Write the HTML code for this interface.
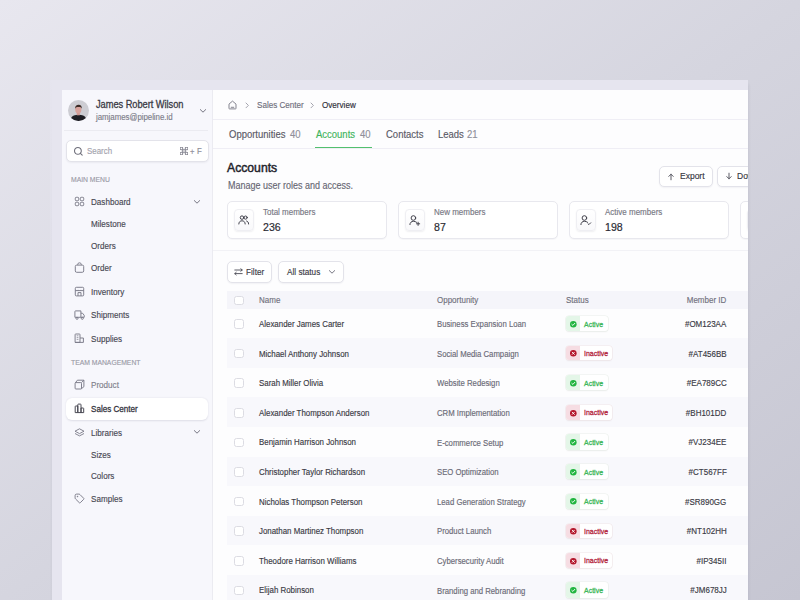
<!DOCTYPE html>
<html>
<head>
<meta charset="utf-8">
<style>
*{box-sizing:border-box;margin:0;padding:0}
html,body{width:800px;height:600px;overflow:hidden}
body{position:relative;font-family:"Liberation Sans",sans-serif;background:linear-gradient(to bottom right,#e8e7ef 0%,#d5d5df 50%,#c6c6d2 100%);color:#3a3a44}
.clip{position:absolute;left:0;top:0;width:748px;height:600px;overflow:hidden}
.abs{position:absolute}
.t{position:absolute;white-space:nowrap;line-height:1;-webkit-text-stroke:0.15px currentColor}
</style>
</head>
<body>
<div style="position:absolute;left:52px;top:84px;width:696px;height:560px;box-shadow:0 0 3px 0.5px rgba(60,60,95,0.10)"></div>
<div class="clip">
<div class="abs" style="left:50px;top:80px;width:2px;height:540px;background:linear-gradient(rgba(230,229,239,0.9),rgba(230,229,239,0.0) 60%)"></div>
<div class="abs" style="left:52px;top:80px;width:696px;height:540px;background:#e6e5ef"></div>
<div class="abs" style="left:62px;top:90px;width:686px;height:530px;background:#fdfdfe"></div>
<div class="abs" style="left:62px;top:90px;width:151px;height:530px;background:#f7f7fc;border-right:1px solid #ebebf1"></div>
<svg class="abs" style="left:68px;top:100px;" width="21" height="21" viewBox="0 0 21 21" fill="none"><circle cx="10.5" cy="10.5" r="10.5" fill="#cdcdd3"/><path d="M3.15 18 C4 15.6 7 14.8 10.5 14.8 C14 14.8 17 15.6 17.85 18 A10.5 10.5 0 0 1 3.15 18 Z" fill="#1e1e24"/><rect x="8.8" y="12" width="3" height="3.3" fill="#cf9792"/><ellipse cx="10.3" cy="9.6" rx="3.1" ry="3.9" fill="#d8a29c"/><path d="M7.2 8.8 C7 5.8 8.5 4.8 10.6 4.8 C12.8 4.8 14 6 13.8 8.8 C13.3 7.4 12.5 7 10.5 7 C8.6 7 7.8 7.4 7.2 8.8Z" fill="#3b2b26"/></svg>
<div class="t" style="left:96.00px;transform-origin:0 50%;top:100.22px;font-size:10.42px;color:#3b3b45;font-weight:400;letter-spacing:-0.05px;transform:scaleX(0.8929);-webkit-text-stroke:0.3px #3b3b45">James Robert Wilson</div>
<div class="t" style="left:96.00px;transform-origin:0 50%;top:113.28px;font-size:8.85px;color:#7d7d8a;font-weight:400;letter-spacing:-0.05px;transform:scaleX(0.8929);">jamjames@pipeline.id</div>
<svg class="abs" style="left:198.5px;top:107.5px;" width="8" height="6" viewBox="0 0 8 6" fill="none"><path d="M1.3 1.6 L4 4.2 L6.7 1.6" stroke="#6f6f7b" stroke-width="0.95" stroke-linecap="round" stroke-linejoin="round"/></svg>
<div class="abs" style="left:64px;top:130px;width:144px;height:1px;background:#ebebf1"></div>
<div class="abs" style="left:66px;top:140px;width:142.5px;height:22px;background:#fff;border:1px solid #e3e3ea;border-radius:5px;box-shadow:0 1px 2px rgba(40,40,70,0.06)"></div>
<svg class="abs" style="left:73px;top:146px;" width="11" height="11" viewBox="0 0 11 11" fill="none"><circle cx="4.9" cy="4.9" r="3.4" stroke="#6e6e7a" stroke-width="1.05"/><path d="M7.4 7.4 L9.2 9.2" stroke="#6e6e7a" stroke-width="1.05" stroke-linecap="round"/></svg>
<div class="t" style="left:86.80px;transform-origin:0 50%;top:147.48px;font-size:8.85px;color:#a3a3ae;font-weight:400;transform:scaleX(0.8929);">Search</div>
<svg class="abs" style="left:180.2px;top:147.1px;" width="8" height="8" viewBox="0 0 8 8" fill="none"><path d="M2.7 6.6 V1.4 A1.3 1.3 0 1 0 1.4 2.7 H6.6 A1.3 1.3 0 1 0 5.3 1.4 V6.6 A1.3 1.3 0 1 0 6.6 5.3 H1.4 A1.3 1.3 0 1 0 2.7 6.6 Z" stroke="#8a8a95" stroke-width="1.05" fill="none" stroke-linejoin="round"/></svg>
<div class="t" style="left:190.00px;transform-origin:0 50%;top:147.55px;font-size:8.51px;color:#8a8a95;font-weight:400;transform:scaleX(0.8929);">+</div>
<div class="t" style="left:196.50px;transform-origin:0 50%;top:147.28px;font-size:8.85px;color:#8a8a95;font-weight:400;transform:scaleX(0.8929);">F</div>
<div class="t" style="left:71.00px;transform-origin:0 50%;top:175.68px;font-size:7.62px;color:#9a9aa6;font-weight:400;transform:scaleX(0.8929);">MAIN MENU</div>
<svg class="abs" style="left:73.5px;top:196.0px;" width="11" height="11" viewBox="0 0 11 11" fill="none"><g stroke="#7a7a88" stroke-width="0.9"><rect x="1.3" y="1.3" width="3.4" height="3.4" rx="0.8"/><rect x="6.3" y="1.3" width="3.4" height="3.4" rx="0.8"/><rect x="1.3" y="6.3" width="3.4" height="3.4" rx="0.8"/><rect x="6.3" y="6.3" width="3.4" height="3.4" rx="0.8"/></g></svg>
<div class="t" style="left:91.10px;transform-origin:0 50%;top:197.87px;font-size:9.07px;color:#484853;font-weight:400;transform:scaleX(0.8929);">Dashboard</div>
<svg class="abs" style="left:192.5px;top:198.5px;" width="8" height="6" viewBox="0 0 8 6" fill="none"><path d="M1.3 1.6 L4 4.2 L6.7 1.6" stroke="#6f6f7b" stroke-width="0.95" stroke-linecap="round" stroke-linejoin="round"/></svg>
<div class="t" style="left:91.10px;transform-origin:0 50%;top:220.37px;font-size:9.07px;color:#484853;font-weight:400;transform:scaleX(0.8929);">Milestone</div>
<div class="t" style="left:91.10px;transform-origin:0 50%;top:241.87px;font-size:9.07px;color:#484853;font-weight:400;transform:scaleX(0.8929);">Orders</div>
<svg class="abs" style="left:73.5px;top:262.3px;" width="11" height="11" viewBox="0 0 11 11" fill="none"><g stroke="#7a7a88" stroke-width="0.95" stroke-linejoin="round"><rect x="1.3" y="3.1" width="8.4" height="7.2" rx="1.4"/><path d="M3.7 3.1 V2.6 A1.8 1.8 0 0 1 7.3 2.6 V3.1"/></g></svg>
<div class="t" style="left:91.10px;transform-origin:0 50%;top:264.17px;font-size:9.07px;color:#484853;font-weight:400;transform:scaleX(0.8929);">Order</div>
<svg class="abs" style="left:73.5px;top:285.9px;" width="11" height="11" viewBox="0 0 11 11" fill="none"><g stroke="#7a7a88" stroke-width="0.95" stroke-linejoin="round"><rect x="1.3" y="1.3" width="8.4" height="8.6" rx="1"/><path d="M1.3 4.6 H9.7 M4.1 4.6 V3.9 M6.9 4.6 V3.9 M4 9.9 V6.6 H7 V9.9"/></g></svg>
<div class="t" style="left:91.10px;transform-origin:0 50%;top:287.77px;font-size:9.07px;color:#484853;font-weight:400;transform:scaleX(0.8929);">Inventory</div>
<svg class="abs" style="left:73.5px;top:309.5px;" width="11" height="11" viewBox="0 0 11 11" fill="none"><g stroke="#7a7a88" stroke-width="0.95" stroke-linejoin="round"><path d="M1.6 0.9 H6.9 V7.3 H0.9 V1.6 Q0.9 0.9 1.6 0.9 Z"/><path d="M6.9 3.2 H8.5 L10.2 5.3 V7.3 H6.9"/><circle cx="3" cy="8.3" r="1.05"/><circle cx="8.3" cy="8.3" r="1.05"/></g></svg>
<div class="t" style="left:91.10px;transform-origin:0 50%;top:311.37px;font-size:9.07px;color:#484853;font-weight:400;transform:scaleX(0.8929);">Shipments</div>
<svg class="abs" style="left:73.5px;top:333.1px;" width="11" height="11" viewBox="0 0 11 11" fill="none"><g stroke="#7a7a88" stroke-width="0.95" stroke-linejoin="round"><path d="M1.1 9.4 V1.6 Q1.1 1 1.7 1 H5.4 Q6 1 6 1.6 V9.4 Z"/><path d="M6 5 H9.4 V9.4 H1.1"/><path d="M2.7 2.8 H4.4 M2.7 4.6 H4.4 M2.7 6.4 H4.4" stroke-width="0.7"/></g></svg>
<div class="t" style="left:91.10px;transform-origin:0 50%;top:334.97px;font-size:9.07px;color:#484853;font-weight:400;transform:scaleX(0.8929);">Supplies</div>
<div class="t" style="left:71.00px;transform-origin:0 50%;top:358.98px;font-size:7.62px;color:#9a9aa6;font-weight:400;transform:scaleX(0.8929);">TEAM MANAGEMENT</div>
<svg class="abs" style="left:73.5px;top:379.3px;" width="11" height="11" viewBox="0 0 11 11" fill="none"><g stroke="#7a7a88" stroke-width="0.95" stroke-linejoin="round"><rect x="1.1" y="3.6" width="6.4" height="6.4" rx="0.8"/><path d="M1.3 3.9 L3.4 1.2 H9.9 V7.7 L7.3 9.8 M7.5 3.6 L9.8 1.3"/></g></svg>
<div class="t" style="left:91.10px;transform-origin:0 50%;top:381.17px;font-size:9.07px;color:#80808b;font-weight:400;transform:scaleX(0.8929);">Product</div>
<div class="abs" style="left:66px;top:398px;width:142px;height:21.8px;background:#fff;border-radius:6px;box-shadow:0 0.5px 2px rgba(40,40,70,0.12)"></div>
<svg class="abs" style="left:73.5px;top:403.1px;" width="11" height="11" viewBox="0 0 11 11" fill="none"><g stroke="#3f3f4a" stroke-width="0.95" stroke-linejoin="round"><path d="M1.2 9.6 V3.6 Q1.2 3 1.8 3 H3.8 V9.6 Z"/><path d="M3.8 9.6 V1.7 Q3.8 1.1 4.4 1.1 H6.4 Q7 1.1 7 1.7 V9.6 Z"/><path d="M7 9.6 V5 H9.1 Q9.7 5 9.7 5.6 V9.6 Z"/></g></svg>
<div class="t" style="left:91.10px;transform-origin:0 50%;top:405.17px;font-size:9.07px;color:#33333d;font-weight:400;transform:scaleX(0.8929);-webkit-text-stroke:0.28px #33333d">Sales Center</div>
<svg class="abs" style="left:73.5px;top:426.7px;" width="11" height="11" viewBox="0 0 11 11" fill="none"><g stroke="#7a7a88" stroke-width="0.9" stroke-linejoin="round"><path d="M5.5 1.8 L10 4.2 L5.5 6.6 L1 4.2 Z"/><path d="M1 6.5 L5.5 8.9 L10 6.5"/></g></svg>
<div class="t" style="left:91.10px;transform-origin:0 50%;top:428.57px;font-size:9.07px;color:#484853;font-weight:400;transform:scaleX(0.8929);">Libraries</div>
<svg class="abs" style="left:192.5px;top:429.2px;" width="8" height="6" viewBox="0 0 8 6" fill="none"><path d="M1.3 1.6 L4 4.2 L6.7 1.6" stroke="#6f6f7b" stroke-width="0.95" stroke-linecap="round" stroke-linejoin="round"/></svg>
<div class="t" style="left:91.10px;transform-origin:0 50%;top:451.17px;font-size:9.07px;color:#484853;font-weight:400;transform:scaleX(0.8929);">Sizes</div>
<div class="t" style="left:91.10px;transform-origin:0 50%;top:472.37px;font-size:9.07px;color:#484853;font-weight:400;transform:scaleX(0.8929);">Colors</div>
<svg class="abs" style="left:73.5px;top:493.2px;" width="11" height="11" viewBox="0 0 11 11" fill="none"><g stroke="#7a7a88" stroke-width="0.95" stroke-linejoin="round"><path d="M1.1 2.6 Q1.1 1.1 2.6 1.1 H4.8 Q5.5 1.1 6 1.6 L9.7 5.3 Q10.2 5.8 9.7 6.3 L6.3 9.7 Q5.8 10.2 5.3 9.7 L1.6 6 Q1.1 5.5 1.1 4.8 Z"/><circle cx="3.5" cy="3.5" r="0.5" fill="#7a7a88" stroke-width="0.5"/></g></svg>
<div class="t" style="left:91.10px;transform-origin:0 50%;top:495.07px;font-size:9.07px;color:#484853;font-weight:400;transform:scaleX(0.8929);">Samples</div>
<svg class="abs" style="left:228px;top:100.2px;" width="9" height="10" viewBox="0 0 9 10" fill="none"><path d="M1 4.1 L4.5 1.1 L8 4.1 V8.4 Q8 8.9 7.5 8.9 H1.5 Q1 8.9 1 8.4 Z" stroke="#7d7d89" stroke-width="0.95" stroke-linejoin="round"/><path d="M3.2 7.3 H5.8" stroke="#7d7d89" stroke-width="0.95" stroke-linecap="round"/></svg>
<svg class="abs" style="left:245.4px;top:101.6px;" width="5" height="7" viewBox="0 0 5 7" fill="none"><path d="M1 1 L3.4 3.4 L1 5.8" stroke="#9a9aa5" stroke-width="0.9" stroke-linecap="round" stroke-linejoin="round"/></svg>
<div class="t" style="left:256.80px;transform-origin:0 50%;top:101.17px;font-size:9.07px;color:#6f6f7c;font-weight:400;transform:scaleX(0.8929);">Sales Center</div>
<svg class="abs" style="left:310.2px;top:101.6px;" width="5" height="7" viewBox="0 0 5 7" fill="none"><path d="M1 1 L3.4 3.4 L1 5.8" stroke="#9a9aa5" stroke-width="0.9" stroke-linecap="round" stroke-linejoin="round"/></svg>
<div class="t" style="left:322.30px;transform-origin:0 50%;top:101.17px;font-size:9.07px;color:#2e2e38;font-weight:500;transform:scaleX(0.8929);">Overview</div>
<div class="abs" style="left:213px;top:119px;width:535px;height:1px;background:#efeef5"></div>
<div class="t" style="left:228.50px;transform-origin:0 50%;top:129.11px;font-size:10.64px;color:#595965;font-weight:400;transform:scaleX(0.8929);">Opportunities</div>
<div class="t" style="left:289.70px;transform-origin:0 50%;top:129.11px;font-size:10.64px;color:#8f8f9a;font-weight:400;transform:scaleX(0.8929);">40</div>
<div class="t" style="left:316.00px;transform-origin:0 50%;top:129.11px;font-size:10.64px;color:#3cb45a;font-weight:400;transform:scaleX(0.8929);">Accounts</div>
<div class="t" style="left:359.70px;transform-origin:0 50%;top:129.11px;font-size:10.64px;color:#8f8f9a;font-weight:400;transform:scaleX(0.8929);">40</div>
<div class="t" style="left:385.60px;transform-origin:0 50%;top:129.11px;font-size:10.64px;color:#595965;font-weight:400;transform:scaleX(0.8929);">Contacts</div>
<div class="t" style="left:437.80px;transform-origin:0 50%;top:129.11px;font-size:10.64px;color:#595965;font-weight:400;transform:scaleX(0.8929);">Leads</div>
<div class="t" style="left:466.80px;transform-origin:0 50%;top:129.11px;font-size:10.64px;color:#8f8f9a;font-weight:400;transform:scaleX(0.8929);">21</div>
<div class="abs" style="left:213px;top:147.5px;width:535px;height:1px;background:#efeef5"></div>
<div class="abs" style="left:314.6px;top:146.6px;width:57.4px;height:1.6px;background:#52c06e"></div>
<div class="t" style="left:227.30px;transform-origin:0 50%;top:162.47px;font-size:12.57px;color:#22222a;font-weight:400;transform:scaleX(0.9709);-webkit-text-stroke:0.45px #22222a">Accounts</div>
<div class="t" style="left:227.50px;transform-origin:0 50%;top:180.88px;font-size:10.08px;color:#676773;font-weight:400;transform:scaleX(0.8929);">Manage user roles and access.</div>
<div class="abs" style="left:659px;top:165.5px;width:54px;height:21.5px;background:#fff;border:1px solid #e3e3ea;border-radius:5px;box-shadow:0 1px 1.5px rgba(40,40,70,0.05)"></div>
<svg class="abs" style="left:667px;top:172.5px;" width="8" height="8" viewBox="0 0 8 8" fill="none"><path d="M4 6.8 V1.2 M1.8 3.4 L4 1.2 L6.2 3.4" stroke="#4a4a55" stroke-width="0.9" stroke-linecap="round" stroke-linejoin="round"/></svg>
<div class="t" style="left:679.50px;transform-origin:0 50%;top:171.45px;font-size:9.52px;color:#34343e;font-weight:400;transform:scaleX(0.8929);">Export</div>
<div class="abs" style="left:717px;top:165.5px;width:60px;height:21.5px;background:#fff;border:1px solid #e3e3ea;border-radius:5px;box-shadow:0 1px 1.5px rgba(40,40,70,0.05)"></div>
<svg class="abs" style="left:724.6px;top:172.3px;" width="8" height="8" viewBox="0 0 8 8" fill="none"><path d="M4 1.2 V6.8 M1.8 4.6 L4 6.8 L6.2 4.6" stroke="#4a4a55" stroke-width="0.9" stroke-linecap="round" stroke-linejoin="round"/></svg>
<div class="t" style="left:737.00px;transform-origin:0 50%;top:171.45px;font-size:9.52px;color:#34343e;font-weight:400;transform:scaleX(0.8929);">Download</div>
<div class="abs" style="left:227px;top:201px;width:160px;height:38px;background:#fff;border:1px solid #e8e8ee;border-radius:5px;box-shadow:0 1px 1px rgba(30,30,60,0.03)"></div>
<div class="abs" style="left:234px;top:208.7px;width:20px;height:22px;background:linear-gradient(#fff,#f9f9fb);border:1px solid #efeff3;border-radius:4px;box-shadow:0 1px 1.5px rgba(40,40,70,0.07)"></div>
<svg class="abs" style="left:238px;top:214.6px;" width="12" height="11" viewBox="0 0 12 11" fill="none"><g stroke="#3a3a44" stroke-width="0.95" stroke-linecap="round"><circle cx="4" cy="2.6" r="1.75"/><circle cx="7.6" cy="2.6" r="1.6"/><path d="M0.8 9 C0.8 6.9 2.2 5.8 4 5.8 C5.8 5.8 7.2 6.9 7.2 9"/><path d="M8.6 6 C9.8 6.3 10.6 7.3 10.6 9"/></g></svg>
<div class="t" style="left:263.40px;transform-origin:0 50%;top:207.73px;font-size:8.96px;color:#777783;font-weight:400;transform:scaleX(0.8929);">Total members</div>
<div class="t" style="left:263.00px;transform-origin:0 50%;top:221.97px;font-size:11.13px;color:#2a2a32;font-weight:400;transform:scaleX(0.9524);-webkit-text-stroke:0.18px #2a2a32">236</div>
<div class="abs" style="left:398px;top:201px;width:160px;height:38px;background:#fff;border:1px solid #e8e8ee;border-radius:5px;box-shadow:0 1px 1px rgba(30,30,60,0.03)"></div>
<div class="abs" style="left:405px;top:208.7px;width:20px;height:22px;background:linear-gradient(#fff,#f9f9fb);border:1px solid #efeff3;border-radius:4px;box-shadow:0 1px 1.5px rgba(40,40,70,0.07)"></div>
<svg class="abs" style="left:409px;top:214.6px;" width="12" height="11" viewBox="0 0 12 11" fill="none"><g stroke="#3a3a44" stroke-width="0.95" stroke-linecap="round" stroke-linejoin="round"><circle cx="4.4" cy="3" r="2.3"/><path d="M0.9 9.6 C0.9 7.5 2.5 6.3 4.4 6.3 C5.7 6.3 6.8 6.7 7.6 7.3"/><path d="M9.1 7.2 V10.4 M7.5 8.8 H10.7"/></g></svg>
<div class="t" style="left:434.40px;transform-origin:0 50%;top:207.73px;font-size:8.96px;color:#777783;font-weight:400;transform:scaleX(0.8929);">New members</div>
<div class="t" style="left:434.00px;transform-origin:0 50%;top:221.97px;font-size:11.13px;color:#2a2a32;font-weight:400;transform:scaleX(0.9524);-webkit-text-stroke:0.18px #2a2a32">87</div>
<div class="abs" style="left:569px;top:201px;width:160px;height:38px;background:#fff;border:1px solid #e8e8ee;border-radius:5px;box-shadow:0 1px 1px rgba(30,30,60,0.03)"></div>
<div class="abs" style="left:576px;top:208.7px;width:20px;height:22px;background:linear-gradient(#fff,#f9f9fb);border:1px solid #efeff3;border-radius:4px;box-shadow:0 1px 1.5px rgba(40,40,70,0.07)"></div>
<svg class="abs" style="left:580px;top:214.6px;" width="12" height="11" viewBox="0 0 12 11" fill="none"><g stroke="#3a3a44" stroke-width="0.95" stroke-linecap="round" stroke-linejoin="round"><circle cx="4.4" cy="3" r="2.3"/><path d="M0.9 9.6 C0.9 7.5 2.5 6.3 4.4 6.3 C5.7 6.3 6.8 6.7 7.6 7.3"/><path d="M8 8.8 L8.9 9.6 L10.7 7.8"/></g></svg>
<div class="t" style="left:605.40px;transform-origin:0 50%;top:207.73px;font-size:8.96px;color:#777783;font-weight:400;transform:scaleX(0.8929);">Active members</div>
<div class="t" style="left:605.00px;transform-origin:0 50%;top:221.97px;font-size:11.13px;color:#2a2a32;font-weight:400;transform:scaleX(0.9524);-webkit-text-stroke:0.18px #2a2a32">198</div>
<div class="abs" style="left:740px;top:201px;width:160px;height:38px;background:#fff;border:1px solid #e8e8ee;border-radius:5px;box-shadow:0 1px 1px rgba(30,30,60,0.03)"></div>
<div class="abs" style="left:747px;top:208.7px;width:20px;height:22px;background:linear-gradient(#fff,#f9f9fb);border:1px solid #efeff3;border-radius:4px;box-shadow:0 1px 1.5px rgba(40,40,70,0.07)"></div>
<svg class="abs" style="left:751px;top:214.6px;" width="12" height="11" viewBox="0 0 12 11" fill="none"><g stroke="#3a3a44" stroke-width="0.95" stroke-linecap="round"><circle cx="4" cy="2.6" r="1.75"/><circle cx="7.6" cy="2.6" r="1.6"/><path d="M0.8 9 C0.8 6.9 2.2 5.8 4 5.8 C5.8 5.8 7.2 6.9 7.2 9"/><path d="M8.6 6 C9.8 6.3 10.6 7.3 10.6 9"/></g></svg>
<div class="t" style="left:776.40px;transform-origin:0 50%;top:207.73px;font-size:8.96px;color:#777783;font-weight:400;transform:scaleX(0.8929);">Inactive members</div>
<div class="t" style="left:776.00px;transform-origin:0 50%;top:221.97px;font-size:11.13px;color:#2a2a32;font-weight:400;transform:scaleX(0.9524);-webkit-text-stroke:0.18px #2a2a32">38</div>
<div class="abs" style="left:213px;top:249.5px;width:535px;height:1px;background:#f2f2f6"></div>
<div class="abs" style="left:226.8px;top:261px;width:45.7px;height:21.5px;background:#fff;border:1px solid #e3e3ea;border-radius:5px;box-shadow:0 1px 1.5px rgba(40,40,70,0.05)"></div>
<svg class="abs" style="left:234.3px;top:268.3px;" width="9" height="8" viewBox="0 0 9 8" fill="none"><g stroke="#4a4a55" stroke-width="0.9" stroke-linecap="round" stroke-linejoin="round"><path d="M0.8 2 H8.2 M6.8 0.7 L8.2 2 L6.8 3.3"/><path d="M8.2 5.6 H0.8 M2.2 4.3 L0.8 5.6 L2.2 6.9"/></g></svg>
<div class="t" style="left:246.20px;transform-origin:0 50%;top:268.12px;font-size:9.18px;color:#3a3a44;font-weight:400;transform:scaleX(0.8929);">Filter</div>
<div class="abs" style="left:278px;top:261px;width:66.3px;height:21.5px;background:#fff;border:1px solid #e3e3ea;border-radius:5px;box-shadow:0 1px 1.5px rgba(40,40,70,0.05)"></div>
<div class="t" style="left:286.70px;transform-origin:0 50%;top:268.12px;font-size:9.18px;color:#3a3a44;font-weight:400;transform:scaleX(0.8929);">All status</div>
<svg class="abs" style="left:327.5px;top:269px;" width="8" height="6" viewBox="0 0 8 6" fill="none"><path d="M1.3 1.6 L4 4.2 L6.7 1.6" stroke="#6f6f7b" stroke-width="0.95" stroke-linecap="round" stroke-linejoin="round"/></svg>
<div class="abs" style="left:227px;top:291px;width:521px;height:17.7px;background:#f5f5fa"></div>
<div class="abs" style="left:234.2px;top:295.8px;width:9.6px;height:9.6px;background:#fff;border:1px solid #dcdce3;border-radius:2.5px"></div>
<div class="t" style="left:259.20px;transform-origin:0 50%;top:296.43px;font-size:8.96px;color:#71717d;font-weight:400;transform:scaleX(0.8929);">Name</div>
<div class="t" style="left:436.80px;transform-origin:0 50%;top:296.43px;font-size:8.96px;color:#71717d;font-weight:400;transform:scaleX(0.8929);">Opportunity</div>
<div class="t" style="left:566.20px;transform-origin:0 50%;top:296.43px;font-size:8.96px;color:#71717d;font-weight:400;transform:scaleX(0.8929);">Status</div>
<div class="t" style="right:21.40px;transform-origin:100% 50%;top:296.43px;font-size:8.96px;color:#71717d;font-weight:400;transform:scaleX(0.8929);">Member ID</div>
<div class="abs" style="left:234.2px;top:319.25px;width:9.6px;height:9.6px;background:#fff;border:1px solid #dcdce3;border-radius:2.5px"></div>
<div class="t" style="left:259.20px;transform-origin:0 50%;top:320.03px;font-size:8.85px;color:#3a3a44;font-weight:400;transform:scaleX(0.8929);">Alexander James Carter</div>
<div class="t" style="left:436.80px;transform-origin:0 50%;top:320.11px;font-size:8.68px;color:#6a6a76;font-weight:400;transform:scaleX(0.8929);">Business Expansion Loan</div>
<div class="abs" style="left:565.5px;top:315.95px;width:42px;height:15.2px;background:#fff;border-radius:3px;box-shadow:0 0 0 0.6px #e9eee9, 0 1px 1.5px rgba(40,60,40,0.08)"></div>
<div class="abs" style="left:565.5px;top:315.95px;width:14.5px;height:15.2px;background:#e4f6e8;border-radius:3px 0 0 3px"></div>
<svg class="abs" style="left:569.5px;top:320.85px;" width="7" height="7" viewBox="0 0 7 7" fill="none"><circle cx="3.3" cy="3.3" r="3.3" fill="#21b540"/><path d="M1.8 3.4 L2.9 4.4 L4.8 2.3" stroke="#fff" stroke-width="0.9" stroke-linecap="round" stroke-linejoin="round"/></svg>
<div class="t" style="left:584.00px;transform-origin:0 50%;top:320.52px;font-size:7.84px;color:#3db75b;font-weight:400;transform:scaleX(0.8929);-webkit-text-stroke:0.3px #3db75b">Active</div>
<div class="t" style="right:21.40px;transform-origin:100% 50%;top:319.98px;font-size:8.96px;color:#3a3a44;font-weight:400;transform:scaleX(0.8929);">#OM123AA</div>
<div class="abs" style="left:227px;top:338.20000000000005px;width:521px;height:29.6px;background:#f8f8fc"></div>
<div class="abs" style="left:234.2px;top:348.85px;width:9.6px;height:9.6px;background:#fff;border:1px solid #dcdce3;border-radius:2.5px"></div>
<div class="t" style="left:259.20px;transform-origin:0 50%;top:349.63px;font-size:8.85px;color:#3a3a44;font-weight:400;transform:scaleX(0.8929);">Michael Anthony Johnson</div>
<div class="t" style="left:436.80px;transform-origin:0 50%;top:349.71px;font-size:8.68px;color:#6a6a76;font-weight:400;transform:scaleX(0.8929);">Social Media Campaign</div>
<div class="abs" style="left:565.5px;top:345.95000000000005px;width:46px;height:14.4px;background:#fff;border-radius:3px;box-shadow:0 0 0 0.6px #f0e6e8, 0 1px 1.5px rgba(60,40,40,0.08)"></div>
<div class="abs" style="left:565.5px;top:345.95000000000005px;width:14.5px;height:14.4px;background:#f6dde3;border-radius:3px 0 0 3px"></div>
<svg class="abs" style="left:569.5px;top:350.45000000000005px;" width="7" height="7" viewBox="0 0 7 7" fill="none"><circle cx="3.3" cy="3.3" r="3.3" fill="#b3162b"/><path d="M2.2 2.2 L4.4 4.4 M4.4 2.2 L2.2 4.4" stroke="#fff" stroke-width="0.9" stroke-linecap="round"/></svg>
<div class="t" style="left:584.00px;transform-origin:0 50%;top:350.12px;font-size:7.84px;color:#b4283f;font-weight:400;transform:scaleX(0.8929);-webkit-text-stroke:0.3px #b4283f">Inactive</div>
<div class="t" style="right:21.40px;transform-origin:100% 50%;top:349.58px;font-size:8.96px;color:#3a3a44;font-weight:400;transform:scaleX(0.8929);">#AT456BB</div>
<div class="abs" style="left:234.2px;top:378.45px;width:9.6px;height:9.6px;background:#fff;border:1px solid #dcdce3;border-radius:2.5px"></div>
<div class="t" style="left:259.20px;transform-origin:0 50%;top:379.23px;font-size:8.85px;color:#3a3a44;font-weight:400;transform:scaleX(0.8929);">Sarah Miller Olivia</div>
<div class="t" style="left:436.80px;transform-origin:0 50%;top:379.31px;font-size:8.68px;color:#6a6a76;font-weight:400;transform:scaleX(0.8929);">Website Redesign</div>
<div class="abs" style="left:565.5px;top:375.15px;width:42px;height:15.2px;background:#fff;border-radius:3px;box-shadow:0 0 0 0.6px #e9eee9, 0 1px 1.5px rgba(40,60,40,0.08)"></div>
<div class="abs" style="left:565.5px;top:375.15px;width:14.5px;height:15.2px;background:#e4f6e8;border-radius:3px 0 0 3px"></div>
<svg class="abs" style="left:569.5px;top:380.05px;" width="7" height="7" viewBox="0 0 7 7" fill="none"><circle cx="3.3" cy="3.3" r="3.3" fill="#21b540"/><path d="M1.8 3.4 L2.9 4.4 L4.8 2.3" stroke="#fff" stroke-width="0.9" stroke-linecap="round" stroke-linejoin="round"/></svg>
<div class="t" style="left:584.00px;transform-origin:0 50%;top:379.72px;font-size:7.84px;color:#3db75b;font-weight:400;transform:scaleX(0.8929);-webkit-text-stroke:0.3px #3db75b">Active</div>
<div class="t" style="right:21.40px;transform-origin:100% 50%;top:379.18px;font-size:8.96px;color:#3a3a44;font-weight:400;transform:scaleX(0.8929);">#EA789CC</div>
<div class="abs" style="left:227px;top:397.40000000000003px;width:521px;height:29.6px;background:#f8f8fc"></div>
<div class="abs" style="left:234.2px;top:408.05px;width:9.6px;height:9.6px;background:#fff;border:1px solid #dcdce3;border-radius:2.5px"></div>
<div class="t" style="left:259.20px;transform-origin:0 50%;top:408.83px;font-size:8.85px;color:#3a3a44;font-weight:400;transform:scaleX(0.8929);">Alexander Thompson Anderson</div>
<div class="t" style="left:436.80px;transform-origin:0 50%;top:408.91px;font-size:8.68px;color:#6a6a76;font-weight:400;transform:scaleX(0.8929);">CRM Implementation</div>
<div class="abs" style="left:565.5px;top:405.15000000000003px;width:46px;height:14.4px;background:#fff;border-radius:3px;box-shadow:0 0 0 0.6px #f0e6e8, 0 1px 1.5px rgba(60,40,40,0.08)"></div>
<div class="abs" style="left:565.5px;top:405.15000000000003px;width:14.5px;height:14.4px;background:#f6dde3;border-radius:3px 0 0 3px"></div>
<svg class="abs" style="left:569.5px;top:409.65000000000003px;" width="7" height="7" viewBox="0 0 7 7" fill="none"><circle cx="3.3" cy="3.3" r="3.3" fill="#b3162b"/><path d="M2.2 2.2 L4.4 4.4 M4.4 2.2 L2.2 4.4" stroke="#fff" stroke-width="0.9" stroke-linecap="round"/></svg>
<div class="t" style="left:584.00px;transform-origin:0 50%;top:409.32px;font-size:7.84px;color:#b4283f;font-weight:400;transform:scaleX(0.8929);-webkit-text-stroke:0.3px #b4283f">Inactive</div>
<div class="t" style="right:21.40px;transform-origin:100% 50%;top:408.78px;font-size:8.96px;color:#3a3a44;font-weight:400;transform:scaleX(0.8929);">#BH101DD</div>
<div class="abs" style="left:234.2px;top:437.65px;width:9.6px;height:9.6px;background:#fff;border:1px solid #dcdce3;border-radius:2.5px"></div>
<div class="t" style="left:259.20px;transform-origin:0 50%;top:438.43px;font-size:8.85px;color:#3a3a44;font-weight:400;transform:scaleX(0.8929);">Benjamin Harrison Johnson</div>
<div class="t" style="left:436.80px;transform-origin:0 50%;top:438.51px;font-size:8.68px;color:#6a6a76;font-weight:400;transform:scaleX(0.8929);">E-commerce Setup</div>
<div class="abs" style="left:565.5px;top:434.34999999999997px;width:42px;height:15.2px;background:#fff;border-radius:3px;box-shadow:0 0 0 0.6px #e9eee9, 0 1px 1.5px rgba(40,60,40,0.08)"></div>
<div class="abs" style="left:565.5px;top:434.34999999999997px;width:14.5px;height:15.2px;background:#e4f6e8;border-radius:3px 0 0 3px"></div>
<svg class="abs" style="left:569.5px;top:439.25px;" width="7" height="7" viewBox="0 0 7 7" fill="none"><circle cx="3.3" cy="3.3" r="3.3" fill="#21b540"/><path d="M1.8 3.4 L2.9 4.4 L4.8 2.3" stroke="#fff" stroke-width="0.9" stroke-linecap="round" stroke-linejoin="round"/></svg>
<div class="t" style="left:584.00px;transform-origin:0 50%;top:438.92px;font-size:7.84px;color:#3db75b;font-weight:400;transform:scaleX(0.8929);-webkit-text-stroke:0.3px #3db75b">Active</div>
<div class="t" style="right:21.40px;transform-origin:100% 50%;top:438.38px;font-size:8.96px;color:#3a3a44;font-weight:400;transform:scaleX(0.8929);">#VJ234EE</div>
<div class="abs" style="left:227px;top:456.6px;width:521px;height:29.6px;background:#f8f8fc"></div>
<div class="abs" style="left:234.2px;top:467.25px;width:9.6px;height:9.6px;background:#fff;border:1px solid #dcdce3;border-radius:2.5px"></div>
<div class="t" style="left:259.20px;transform-origin:0 50%;top:468.03px;font-size:8.85px;color:#3a3a44;font-weight:400;transform:scaleX(0.8929);">Christopher Taylor Richardson</div>
<div class="t" style="left:436.80px;transform-origin:0 50%;top:468.11px;font-size:8.68px;color:#6a6a76;font-weight:400;transform:scaleX(0.8929);">SEO Optimization</div>
<div class="abs" style="left:565.5px;top:463.95px;width:42px;height:15.2px;background:#fff;border-radius:3px;box-shadow:0 0 0 0.6px #e9eee9, 0 1px 1.5px rgba(40,60,40,0.08)"></div>
<div class="abs" style="left:565.5px;top:463.95px;width:14.5px;height:15.2px;background:#e4f6e8;border-radius:3px 0 0 3px"></div>
<svg class="abs" style="left:569.5px;top:468.85px;" width="7" height="7" viewBox="0 0 7 7" fill="none"><circle cx="3.3" cy="3.3" r="3.3" fill="#21b540"/><path d="M1.8 3.4 L2.9 4.4 L4.8 2.3" stroke="#fff" stroke-width="0.9" stroke-linecap="round" stroke-linejoin="round"/></svg>
<div class="t" style="left:584.00px;transform-origin:0 50%;top:468.52px;font-size:7.84px;color:#3db75b;font-weight:400;transform:scaleX(0.8929);-webkit-text-stroke:0.3px #3db75b">Active</div>
<div class="t" style="right:21.40px;transform-origin:100% 50%;top:467.98px;font-size:8.96px;color:#3a3a44;font-weight:400;transform:scaleX(0.8929);">#CT567FF</div>
<div class="abs" style="left:234.2px;top:496.85px;width:9.6px;height:9.6px;background:#fff;border:1px solid #dcdce3;border-radius:2.5px"></div>
<div class="t" style="left:259.20px;transform-origin:0 50%;top:497.63px;font-size:8.85px;color:#3a3a44;font-weight:400;transform:scaleX(0.8929);">Nicholas Thompson Peterson</div>
<div class="t" style="left:436.80px;transform-origin:0 50%;top:497.71px;font-size:8.68px;color:#6a6a76;font-weight:400;transform:scaleX(0.8929);">Lead Generation Strategy</div>
<div class="abs" style="left:565.5px;top:493.55px;width:42px;height:15.2px;background:#fff;border-radius:3px;box-shadow:0 0 0 0.6px #e9eee9, 0 1px 1.5px rgba(40,60,40,0.08)"></div>
<div class="abs" style="left:565.5px;top:493.55px;width:14.5px;height:15.2px;background:#e4f6e8;border-radius:3px 0 0 3px"></div>
<svg class="abs" style="left:569.5px;top:498.45000000000005px;" width="7" height="7" viewBox="0 0 7 7" fill="none"><circle cx="3.3" cy="3.3" r="3.3" fill="#21b540"/><path d="M1.8 3.4 L2.9 4.4 L4.8 2.3" stroke="#fff" stroke-width="0.9" stroke-linecap="round" stroke-linejoin="round"/></svg>
<div class="t" style="left:584.00px;transform-origin:0 50%;top:498.12px;font-size:7.84px;color:#3db75b;font-weight:400;transform:scaleX(0.8929);-webkit-text-stroke:0.3px #3db75b">Active</div>
<div class="t" style="right:21.40px;transform-origin:100% 50%;top:497.58px;font-size:8.96px;color:#3a3a44;font-weight:400;transform:scaleX(0.8929);">#SR890GG</div>
<div class="abs" style="left:227px;top:515.8000000000001px;width:521px;height:29.6px;background:#f8f8fc"></div>
<div class="abs" style="left:234.2px;top:526.45px;width:9.6px;height:9.6px;background:#fff;border:1px solid #dcdce3;border-radius:2.5px"></div>
<div class="t" style="left:259.20px;transform-origin:0 50%;top:527.23px;font-size:8.85px;color:#3a3a44;font-weight:400;transform:scaleX(0.8929);">Jonathan Martinez Thompson</div>
<div class="t" style="left:436.80px;transform-origin:0 50%;top:527.31px;font-size:8.68px;color:#6a6a76;font-weight:400;transform:scaleX(0.8929);">Product Launch</div>
<div class="abs" style="left:565.5px;top:523.55px;width:46px;height:14.4px;background:#fff;border-radius:3px;box-shadow:0 0 0 0.6px #f0e6e8, 0 1px 1.5px rgba(60,40,40,0.08)"></div>
<div class="abs" style="left:565.5px;top:523.55px;width:14.5px;height:14.4px;background:#f6dde3;border-radius:3px 0 0 3px"></div>
<svg class="abs" style="left:569.5px;top:528.05px;" width="7" height="7" viewBox="0 0 7 7" fill="none"><circle cx="3.3" cy="3.3" r="3.3" fill="#b3162b"/><path d="M2.2 2.2 L4.4 4.4 M4.4 2.2 L2.2 4.4" stroke="#fff" stroke-width="0.9" stroke-linecap="round"/></svg>
<div class="t" style="left:584.00px;transform-origin:0 50%;top:527.72px;font-size:7.84px;color:#b4283f;font-weight:400;transform:scaleX(0.8929);-webkit-text-stroke:0.3px #b4283f">Inactive</div>
<div class="t" style="right:21.40px;transform-origin:100% 50%;top:527.18px;font-size:8.96px;color:#3a3a44;font-weight:400;transform:scaleX(0.8929);">#NT102HH</div>
<div class="abs" style="left:234.2px;top:556.0500000000001px;width:9.6px;height:9.6px;background:#fff;border:1px solid #dcdce3;border-radius:2.5px"></div>
<div class="t" style="left:259.20px;transform-origin:0 50%;top:556.83px;font-size:8.85px;color:#3a3a44;font-weight:400;transform:scaleX(0.8929);">Theodore Harrison Williams</div>
<div class="t" style="left:436.80px;transform-origin:0 50%;top:556.91px;font-size:8.68px;color:#6a6a76;font-weight:400;transform:scaleX(0.8929);">Cybersecurity Audit</div>
<div class="abs" style="left:565.5px;top:553.15px;width:46px;height:14.4px;background:#fff;border-radius:3px;box-shadow:0 0 0 0.6px #f0e6e8, 0 1px 1.5px rgba(60,40,40,0.08)"></div>
<div class="abs" style="left:565.5px;top:553.15px;width:14.5px;height:14.4px;background:#f6dde3;border-radius:3px 0 0 3px"></div>
<svg class="abs" style="left:569.5px;top:557.65px;" width="7" height="7" viewBox="0 0 7 7" fill="none"><circle cx="3.3" cy="3.3" r="3.3" fill="#b3162b"/><path d="M2.2 2.2 L4.4 4.4 M4.4 2.2 L2.2 4.4" stroke="#fff" stroke-width="0.9" stroke-linecap="round"/></svg>
<div class="t" style="left:584.00px;transform-origin:0 50%;top:557.32px;font-size:7.84px;color:#b4283f;font-weight:400;transform:scaleX(0.8929);-webkit-text-stroke:0.3px #b4283f">Inactive</div>
<div class="t" style="right:21.40px;transform-origin:100% 50%;top:556.78px;font-size:8.96px;color:#3a3a44;font-weight:400;transform:scaleX(0.8929);">#IP345II</div>
<div class="abs" style="left:227px;top:575.0px;width:521px;height:29.6px;background:#f8f8fc"></div>
<div class="abs" style="left:234.2px;top:585.65px;width:9.6px;height:9.6px;background:#fff;border:1px solid #dcdce3;border-radius:2.5px"></div>
<div class="t" style="left:259.20px;transform-origin:0 50%;top:586.43px;font-size:8.85px;color:#3a3a44;font-weight:400;transform:scaleX(0.8929);">Elijah Robinson</div>
<div class="t" style="left:436.80px;transform-origin:0 50%;top:586.51px;font-size:8.68px;color:#6a6a76;font-weight:400;transform:scaleX(0.8929);">Branding and Rebranding</div>
<div class="abs" style="left:565.5px;top:582.3499999999999px;width:42px;height:15.2px;background:#fff;border-radius:3px;box-shadow:0 0 0 0.6px #e9eee9, 0 1px 1.5px rgba(40,60,40,0.08)"></div>
<div class="abs" style="left:565.5px;top:582.3499999999999px;width:14.5px;height:15.2px;background:#e4f6e8;border-radius:3px 0 0 3px"></div>
<svg class="abs" style="left:569.5px;top:587.2499999999999px;" width="7" height="7" viewBox="0 0 7 7" fill="none"><circle cx="3.3" cy="3.3" r="3.3" fill="#21b540"/><path d="M1.8 3.4 L2.9 4.4 L4.8 2.3" stroke="#fff" stroke-width="0.9" stroke-linecap="round" stroke-linejoin="round"/></svg>
<div class="t" style="left:584.00px;transform-origin:0 50%;top:586.92px;font-size:7.84px;color:#3db75b;font-weight:400;transform:scaleX(0.8929);-webkit-text-stroke:0.3px #3db75b">Active</div>
<div class="t" style="right:21.40px;transform-origin:100% 50%;top:586.38px;font-size:8.96px;color:#3a3a44;font-weight:400;transform:scaleX(0.8929);">#JM678JJ</div>
</div>
</body>
</html>
